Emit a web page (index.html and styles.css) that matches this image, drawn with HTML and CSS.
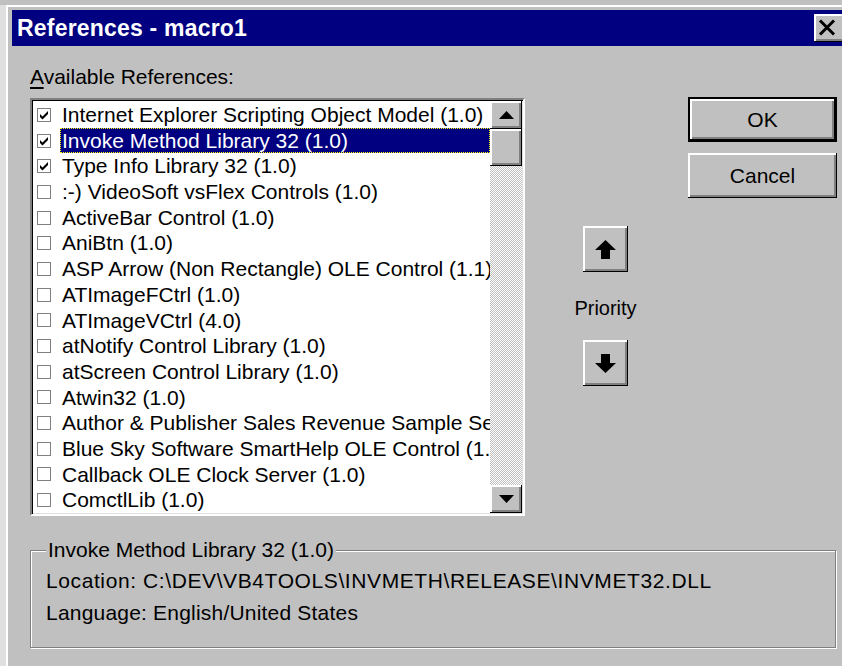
FILE: index.html
```html
<!DOCTYPE html>
<html lang="en">
<head>
<meta charset="utf-8">
<title>References - macro1</title>
<link rel="stylesheet" href="styles.css">
</head>
<body>
<div class="window">
  <div class="titlebar">
    <span class="title">References - macro1</span>
    <button class="close" aria-label="Close">
      <svg width="18" height="17" viewBox="0 0 18 17"><path d="M2 1.5 L16 15.5 M16 1.5 L2 15.5" stroke="#000" stroke-width="3" fill="none"/></svg>
    </button>
  </div>

  <div class="client">
    <div class="top">
      <div class="refs">
        <div class="label"><u>A</u>vailable References:</div>
        <div class="listbox">
          <ul class="items">
            <li class="item"><span class="check"><svg viewBox="0 0 12 12"><polygon points="2,5 4.5,7.5 10,2 10,5 4.5,10.5 2,8"/></svg></span><span class="name">Internet Explorer Scripting Object Model (1.0)</span></li>
            <li class="item sel"><span class="check"><svg viewBox="0 0 12 12"><polygon points="2,5 4.5,7.5 10,2 10,5 4.5,10.5 2,8"/></svg></span><span class="name">Invoke Method Library 32 (1.0)</span></li>
            <li class="item"><span class="check"><svg viewBox="0 0 12 12"><polygon points="2,5 4.5,7.5 10,2 10,5 4.5,10.5 2,8"/></svg></span><span class="name">Type Info Library 32 (1.0)</span></li>
            <li class="item"><span class="check"></span><span class="name">:-) VideoSoft vsFlex Controls (1.0)</span></li>
            <li class="item"><span class="check"></span><span class="name">ActiveBar Control (1.0)</span></li>
            <li class="item"><span class="check"></span><span class="name">AniBtn (1.0)</span></li>
            <li class="item"><span class="check"></span><span class="name">ASP Arrow (Non Rectangle) OLE Control (1.1)</span></li>
            <li class="item"><span class="check"></span><span class="name">ATImageFCtrl (1.0)</span></li>
            <li class="item"><span class="check"></span><span class="name">ATImageVCtrl (4.0)</span></li>
            <li class="item"><span class="check"></span><span class="name">atNotify Control Library (1.0)</span></li>
            <li class="item"><span class="check"></span><span class="name">atScreen Control Library (1.0)</span></li>
            <li class="item"><span class="check"></span><span class="name">Atwin32 (1.0)</span></li>
            <li class="item"><span class="check"></span><span class="name">Author &amp; Publisher Sales Revenue Sample Server (1.0)</span></li>
            <li class="item"><span class="check"></span><span class="name">Blue Sky Software SmartHelp OLE Control (1.0)</span></li>
            <li class="item"><span class="check"></span><span class="name">Callback OLE Clock Server (1.0)</span></li>
            <li class="item"><span class="check"></span><span class="name">ComctlLib (1.0)</span></li>
          </ul>
          <div class="scrollbar">
            <div class="raised sb-btn"><svg width="15" height="8" viewBox="0 0 15 8"><polygon points="7.5,0 15,8 0,8"/></svg></div>
            <div class="raised sb-thumb"></div>
            <div class="sb-track"></div>
            <div class="raised sb-btn"><svg width="15" height="8" viewBox="0 0 15 8"><polygon points="0,0 15,0 7.5,8"/></svg></div>
          </div>
        </div>
      </div>

      <div class="priority">
        <button class="raised arrow" aria-label="Move up">
          <svg width="21" height="19" viewBox="0 0 21 19"><polygon points="10.5,0 21,10 15,10 15,19 6,19 6,10 0,10"/></svg>
        </button>
        <div class="prio-label">Priority</div>
        <button class="raised arrow" aria-label="Move down">
          <svg width="21" height="19" viewBox="0 0 21 19"><polygon points="6,0 15,0 15,9 21,9 10.5,19 0,9 6,9"/></svg>
        </button>
      </div>

      <div class="actions">
        <button class="raised cmd default">OK</button>
        <button class="raised cmd">Cancel</button>
      </div>
    </div>

    <div class="group">
      <div class="legend">Invoke Method Library 32 (1.0)</div>
      <div class="line loc">Location: C:\DEV\VB4TOOLS\INVMETH\RELEASE\INVMET32.DLL</div>
      <div class="line lang">Language: English/United States</div>
    </div>
  </div>
</div>
</body>
</html>
```

FILE: styles.css
```css
* { box-sizing: border-box; }

html, body {
  margin: 0;
  height: 100%;
}

body {
  background: #c0c0c0;
  overflow: hidden;
  font-family: "Liberation Sans", Arial, sans-serif;
  font-size: 21px;
  line-height: 24px;
  color: #000;
}

/* dialog frame */
.window {
  width: 850px;
  min-height: 700px;
  margin-top: 5px;
  border-left: 6px solid #dfdfdf;
  box-shadow: inset 2px 2px 0 #fff;
  padding: 5px 0 0 6px;
}

.titlebar {
  display: flex;
  align-items: center;
  height: 36px;
  padding: 0 4px 0 5px;
  background: #000080;
  color: #fff;
  overflow: hidden;
}

.title {
  font-weight: bold;
  font-size: 23px;
  letter-spacing: 0.2px;
}

/* shared 3D bevel */
.raised {
  background: #c0c0c0;
  border: 0;
  padding: 0;
  box-shadow: inset -1px -1px 0 #000, inset 2px 2px 0 #fff, inset -3px -3px 0 #808080;
  display: flex;
  align-items: center;
  justify-content: center;
  font: inherit;
  color: #000;
}

.close {
  margin-left: auto;
  flex: none;
  width: 32px;
  height: 28px;
  padding: 0 6px 1px 0;
  background: #c0c0c0;
  border: 0;
  box-shadow: inset -1px -1px 0 #000, inset 2px 2px 0 #fff, inset -3px -3px 0 #808080;
  display: flex;
  align-items: center;
  justify-content: center;
}

.client {
  padding: 19px 0 0 18px;
}

.top {
  display: flex;
  align-items: flex-start;
}

.refs {
  width: 495px;
  flex: none;
}

.label {
  margin-bottom: 9px;
}

.label u {
  text-underline-offset: 3px;
}

/* list with check boxes */
.listbox {
  display: flex;
  height: 418px;
  border: 2px solid;
  border-color: #808080 #fff #fff #808080;
  box-shadow: inset 1px 1px 0 #000, inset -1px -1px 0 #dfdfdf;
  padding: 1px;
  background: #fff;
}

.items {
  flex: 1;
  min-width: 0;
  margin: 0;
  padding: 1px 0 0 4px;
  list-style: none;
  overflow: hidden;
}

.item {
  display: flex;
  align-items: center;
  height: 25.7px;
  line-height: 25.7px;
  white-space: nowrap;
}

.check {
  flex: none;
  width: 14px;
  height: 14px;
  margin-right: 9px;
  border: 1px solid #808080;
  background: #fff;
  display: flex;
}

.check svg {
  width: 12px;
  height: 12px;
  fill: #000;
}

.name {
  flex: 1;
  min-width: 0;
  overflow: hidden;
  padding: 0 2px;
}

.item.sel .name {
  background: #000080;
  color: #fff;
  outline: 1px dotted #ffff00;
  outline-offset: -1px;
}

.scrollbar {
  flex: none;
  width: 32px;
  display: flex;
  flex-direction: column;
  background: repeating-conic-gradient(#fff 0 25%, #c0c0c0 0 50%) 0 0 / 2px 2px;
}

.sb-btn {
  height: 28px;
}

.sb-btn svg { fill: #000; }

.sb-thumb {
  height: 37px;
}

.sb-track {
  flex: 1;
}

/* priority arrows */
.priority {
  flex: none;
  width: 45px;
  margin: 161px 0 0 58px;
  display: flex;
  flex-direction: column;
  align-items: center;
}

.arrow {
  width: 45px;
  height: 46px;
}

.arrow svg { fill: #000; }

.prio-label {
  margin: 24px 0 20px;
  white-space: nowrap;
  font-size: 20px;
}

/* OK / Cancel */
.actions {
  flex: none;
  width: 149px;
  margin: 32px 0 0 60px;
  display: flex;
  flex-direction: column;
  gap: 11px;
}

.cmd {
  height: 45px;
  width: 149px;
}

.cmd.default {
  border: 2px solid #000;
}

/* details frame */
.group {
  width: 806px;
  margin-top: 34px;
  border: 1px solid #808080;
  box-shadow: 1px 1px 0 #fff, inset 1px 1px 0 #fff;
  padding: 0 0 22px 15px;
}

.legend {
  width: max-content;
  margin-top: -13px;
  padding: 0 2px;
  background: #c0c0c0;
}

.line.loc {
  margin-top: 7px;
  letter-spacing: 0.6px;
}

.line.lang {
  margin-top: 8px;
  letter-spacing: 0.2px;
}
```
